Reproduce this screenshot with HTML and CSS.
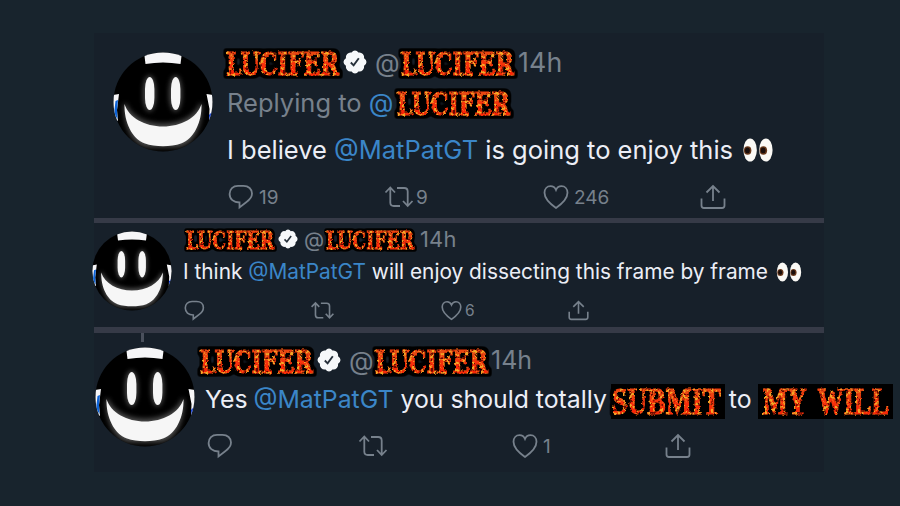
FILE: index.html
```html
<!DOCTYPE html>
<html lang="en">
<head>
    <meta charset="UTF-8">
    <meta name="viewport" content="width=device-width, initial-scale=1.0">
    <title>Tweets</title>
    <link rel="stylesheet" href="styles.css">
</head>
<body>
    <!-- Shared icons -->
    <svg class="defs" width="0" height="0">
        <defs>
            <linearGradient id="fire" x1="0" y1="0" x2="0" y2="1">
                <stop offset="0" stop-color="#d8641c"/>
                <stop offset="0.5" stop-color="#f8300c"/>
                <stop offset="1" stop-color="#ff1200"/>
            </linearGradient>
            <filter id="burn" x="-10%" y="-40%" width="120%" height="180%" color-interpolation-filters="sRGB">
                <feTurbulence type="fractalNoise" baseFrequency="0.32" numOctaves="2" seed="4" result="noise"/>
                <feDisplacementMap in="SourceGraphic" in2="noise" scale="3" xChannelSelector="R" yChannelSelector="G" result="rough"/>
                <feColorMatrix in="noise" type="matrix" values="0 0 0 0 0.96  0 0 0 0 0.66  0 0 0 0 0.15  8 0 0 0 -4.1" result="sparks"/>
                <feComposite in="sparks" in2="rough" operator="in" result="hot"/>
                <feColorMatrix in="noise" type="matrix" values="0 0 0 0 0.4  0 0 0 0 0.04  0 0 0 0 0  0 9 0 0 -5.4" result="soot"/>
                <feComposite in="soot" in2="rough" operator="in" result="dark"/>
                <feMorphology in="SourceAlpha" operator="dilate" radius="3" result="fat"/>
                <feGaussianBlur in="fat" stdDeviation="1.5" result="soft"/>
                <feColorMatrix in="soft" type="matrix" values="0 0 0 0 0  0 0 0 0 0  0 0 0 0 0  0 0 0 3 -0.8" result="halo"/>
                <feMerge>
                    <feMergeNode in="halo"/>
                    <feMergeNode in="rough"/>
                    <feMergeNode in="hot"/>
                    <feMergeNode in="dark"/>
                </feMerge>
            </filter>
            <filter id="glow" x="-20%" y="-20%" width="140%" height="140%">
                <feGaussianBlur stdDeviation="2.5"/>
            </filter>
            <clipPath id="round"><circle cx="50" cy="50" r="49.5"/></clipPath>
        </defs>
        <symbol id="face" viewBox="0 0 100 100">
            <g clip-path="url(#round)">
                <rect width="100" height="100" fill="#000"/>
                <path d="M31 0H69L67.500 12Q50 9 32.500 12Z" fill="#f6f6f8"/>
                <path d="M0 43L6 42L4 58L5 69L0 66Z" fill="#f6f6f8"/>
                <path d="M2.500 49L5 48L4 58L4.500 67L1 62Z" fill="#0c63d8"/>
                <path d="M93.500 42L100 43V68L96 69L96.500 57Z" fill="#f6f6f8"/>
                <path d="M96 63L99 60L97 70Z" fill="#0737d8"/>
                <g fill="#888" stroke="#777" stroke-width="3" opacity="0.6" filter="url(#glow)">
                    <ellipse cx="36.500" cy="41.500" rx="5" ry="16.500"/>
                    <ellipse cx="62.500" cy="41.500" rx="5" ry="16.500"/>
                    <path d="M12 52C22 80 78 80 88 52C88 70 82 94 62 94H38C18 94 12 70 12 52Z"/>
                </g>
                <g fill="#f6f6f6">
                    <rect x="32" y="25" width="9.400" height="33" rx="4.700" ry="12"/>
                    <rect x="58" y="25" width="9.400" height="33" rx="4.700" ry="12"/>
                    <path d="M11.500 52C16 66 32 74.500 50 74.500C68 74.500 84 66 88.500 52C89 70 81 87 68 91.500C58 95 42 95 32 91.500C19 87 11 70 11.500 52Z"/>
                </g>
            </g>
        </symbol>
        <symbol id="verified" viewBox="0 0 24 24">
            <path d="M12 .5Q14.200 .5 15.400 2.600Q17.800 1.900 19.900 4.100Q21.500 5.800 21.100 8.200Q23.500 9.700 23.500 12Q23.500 14.300 21.100 15.800Q21.500 18.200 19.900 19.900Q17.800 22.100 15.400 21.400Q14.200 23.500 12 23.500Q9.800 23.500 8.600 21.400Q6.200 22.100 4.100 19.900Q2.500 18.200 2.900 15.800Q.5 14.300 .5 12Q.5 9.700 2.900 8.200Q2.500 5.800 4.100 4.100Q6.200 1.900 8.600 2.600Q9.800 .5 12 .5Z" fill="#f6f8fa"/>
            <path d="M7.800 12.500L10.600 15.300L15.800 8.300" fill="none" stroke="#26303a" stroke-width="1.900"/>
        </symbol>
        <symbol id="reply" viewBox="0 0 26 26">
            <path d="M10 1.800H15.500C20.500 1.800 24 5 24 9.600C24 13.500 21.800 15.700 18.500 18L11.500 23.500V18.500C5.500 18.500 1.600 15 1.600 10C1.600 5 5 1.800 10 1.800Z"/>
        </symbol>
        <symbol id="retweet" viewBox="0 0 30 26">
            <path d="M1.500 8.500L6.300 3.500L11 8.500M6.300 4V18.500Q6.300 22 9.800 22H16M13 4H20.200Q23.700 4 23.700 7.500V21.500M19 17L23.700 22L28.500 17"/>
        </symbol>
        <symbol id="like" viewBox="0 0 26 26">
            <path d="M13 24C8 20.500 1.500 15 1.500 8.800C1.500 5 4 2.200 7.500 2.200C10 2.200 12 3.600 13 6C14 3.600 16 2.200 18.500 2.200C22 2.200 24.500 5 24.500 8.800C24.500 15 18 20.500 13 24Z"/>
        </symbol>
        <symbol id="share" viewBox="0 0 26 26">
            <path d="M1.500 14.500V21.500Q1.500 24 4 24H22Q24.500 24 24.500 21.500V14.500M13 17V2M6.500 8.500L13 2L19.500 8.500"/>
        </symbol>
        <symbol id="eyes" viewBox="0 0 32 25">
            <ellipse cx="7.800" cy="12.500" rx="7" ry="12" fill="#fbf9f5"/>
            <ellipse cx="24.200" cy="12.500" rx="7" ry="12" fill="#fbf9f5"/>
            <ellipse cx="5.200" cy="13" rx="3.900" ry="4.400" fill="#6b3a1c"/>
            <ellipse cx="21.600" cy="13" rx="3.900" ry="4.400" fill="#6b3a1c"/>
            <ellipse cx="5" cy="13" rx="2.500" ry="3" fill="#1a0d0a"/>
            <ellipse cx="21.400" cy="13" rx="2.500" ry="3" fill="#1a0d0a"/>
        </symbol>
    </svg>

    <div class="thread">
        <div class="tweet first">
            <svg class="avatar"><use href="#face"/></svg>
            <div class="content">
                <div class="head">
                    <svg class="flame" viewBox="0 0 114 24"><text x="-1" y="23" textLength="113" lengthAdjust="spacingAndGlyphs">LUCIFER</text></svg>
                    <svg class="badge"><use href="#verified"/></svg>
                    <span class="at">@</span>
                    <svg class="flame" viewBox="0 0 114 24"><text x="0" y="23" textLength="113" lengthAdjust="spacingAndGlyphs">LUCIFER</text></svg>
                    <span class="time">14h</span>
                </div>
                <div class="replying">
                    <span>Replying to <span class="mention">@</span></span>
                    <svg class="flame" viewBox="0 0 114 24"><text x="0" y="23" textLength="113" lengthAdjust="spacingAndGlyphs">LUCIFER</text></svg>
                </div>
                <div class="text">
                    <span>I believe <span class="mention">@MatPatGT</span> is going to enjoy this</span>
                    <svg class="eyes"><use href="#eyes"/></svg>
                </div>
                <div class="actions">
                    <div class="action"><svg class="icon"><use href="#reply"/></svg>19</div>
                    <div class="action"><svg class="icon wide"><use href="#retweet"/></svg>9</div>
                    <div class="action"><svg class="icon"><use href="#like"/></svg>246</div>
                    <div class="action"><svg class="icon"><use href="#share"/></svg></div>
                </div>
            </div>
        </div>

        <div class="tweet second">
            <svg class="avatar"><use href="#face"/></svg>
            <div class="content">
                <div class="head">
                    <svg class="flame" viewBox="0 0 114 24"><text x="0" y="23" textLength="113" lengthAdjust="spacingAndGlyphs">LUCIFER</text></svg>
                    <svg class="badge"><use href="#verified"/></svg>
                    <span class="at">@</span>
                    <svg class="flame" viewBox="0 0 114 24"><text x="0" y="23" textLength="113" lengthAdjust="spacingAndGlyphs">LUCIFER</text></svg>
                    <span class="time">14h</span>
                </div>
                <div class="text">
                    <span>I think <span class="mention">@MatPatGT</span> will enjoy dissecting this frame by frame</span>
                    <svg class="eyes"><use href="#eyes"/></svg>
                </div>
                <div class="actions">
                    <div class="action"><svg class="icon"><use href="#reply"/></svg></div>
                    <div class="action"><svg class="icon wide"><use href="#retweet"/></svg></div>
                    <div class="action"><svg class="icon"><use href="#like"/></svg>6</div>
                    <div class="action"><svg class="icon"><use href="#share"/></svg></div>
                </div>
            </div>
        </div>

        <div class="tweet third">
            <svg class="avatar"><use href="#face"/></svg>
            <div class="content">
                <div class="head">
                    <svg class="flame" viewBox="0 0 114 24"><text x="0" y="23" textLength="113" lengthAdjust="spacingAndGlyphs">LUCIFER</text></svg>
                    <svg class="badge"><use href="#verified"/></svg>
                    <span class="at">@</span>
                    <svg class="flame" viewBox="0 0 114 24"><text x="0" y="23" textLength="113" lengthAdjust="spacingAndGlyphs">LUCIFER</text></svg>
                    <span class="time">14h</span>
                </div>
                <div class="text">
                    <span>Yes <span class="mention">@MatPatGT</span> you should totally</span>
                    <svg class="flame sign submit" viewBox="0 0 114 35"><text x="1" y="30" textLength="109" lengthAdjust="spacingAndGlyphs">SUBMIT</text></svg>
                    <span>to</span>
                    <svg class="flame sign will" viewBox="0 0 135 35"><text x="5" y="30" textLength="126" lengthAdjust="spacingAndGlyphs">MY WILL</text></svg>
                </div>
                <div class="actions">
                    <div class="action"><svg class="icon"><use href="#reply"/></svg></div>
                    <div class="action"><svg class="icon wide"><use href="#retweet"/></svg></div>
                    <div class="action"><svg class="icon"><use href="#like"/></svg>1</div>
                    <div class="action"><svg class="icon"><use href="#share"/></svg></div>
                </div>
            </div>
        </div>
    </div>
</body>
</html>
```
FILE: styles.css
```css
body {
    margin: 0;
    height: 506px;
    overflow: hidden;
    background-color: #18242d;
    font-family: Inter, "Liberation Sans", sans-serif;
}
.defs {
    position: absolute;
}
.thread {
    width: 730px;
    height: 439px;
    margin: 33px 0 0 94px;
    background-color: #17202a;
}
.tweet {
    display: flex;
    box-sizing: border-box;
    font-size: 25.5px;
    color: #eceef6;
    white-space: nowrap;
}
.avatar {
    flex: none;
    width: 100px;
    height: 100px;
}
.content {
    flex: none;
}
.head,
.replying,
.text {
    display: flex;
    align-items: center;
    height: 40px;
    color: #77818c;
}
.text {
    color: #eceef6;
}
.mention {
    color: #3b86c8;
}

/* Burning words */
.flame {
    flex: none;
    width: 114px;
    height: 24px;
    overflow: visible;
}
.flame text {
    font-family: "DejaVu Serif", serif;
    font-size: 31px;
    font-weight: bold;
    fill: url(#fire);
    stroke: #f23a0c;
    stroke-width: 1px;
    filter: url(#burn);
}
.sign {
    height: 35px;
    background-color: #000;
}
.flame.sign text {
    font-family: "Liberation Serif", serif;
    font-size: 37px;
    word-spacing: 8px;
}
.will {
    width: 135px;
}
.badge {
    flex: none;
    width: 24px;
    height: 24px;
    margin-left: 3px;
}
.at {
    width: 26px;
    margin-left: 8px;
}
.time {
    margin-left: 3px;
    font-size: 1.05em;
    letter-spacing: 0.2px;
}
.eyes {
    width: 32px;
    height: 24px;
    margin-left: 9px;
}

/* Bottom row */
.actions {
    display: grid;
    grid-template-columns: 156px 159px 157px 60px;
    height: 40px;
    color: #77818c;
    font-size: 19px;
}
.action {
    display: flex;
    align-items: center;
    gap: 5px;
}
.icon {
    width: 26px;
    height: 26px;
    fill: none;
    stroke: #77818c;
    stroke-width: 1.8;
}
.wide {
    width: 30px;
    margin-right: -3px;
}

.first {
    height: 190px;
    padding: 9px 0 0 19px;
    border-bottom: 5px solid #363a47;
}
.first .avatar {
    margin: 10px 14px 0 0;
}
.first .flame {
    margin-top: 4px;
}
.first .replying .flame {
    margin-left: 4px;
}
.first .badge {
    margin-left: 2px;
}
.first .text {
    height: 55px;
}
.first .actions {
    padding-left: 1px;
}

.second {
    height: 110px;
    font-size: 20.85px;
    border-bottom: 6px solid #363a47;
}
.second .avatar {
    width: 80px;
    height: 80px;
    margin: 8px 11px 0 -2px;
}
.second .head {
    height: 32px;
}
.second .text {
    height: 33px;
}
.second .flame {
    width: 89px;
    height: 19px;
    margin-top: 3px;
}
.second .head .flame:first-child {
    margin-left: 3px;
}
.second .badge {
    width: 20px;
    height: 20px;
    margin-left: 3px;
}
.second .at {
    width: 22px;
    margin-left: 6px;
}
.second .time {
    margin-left: 5px;
}
.second .eyes {
    width: 26px;
    height: 20px;
    margin-left: 8px;
}
.second .actions {
    grid-template-columns: 126px 131px 127px 60px;
    height: 34px;
    margin-top: 5px;
    padding-left: 1px;
    font-size: 15.5px;
}
.second .icon {
    width: 21px;
    height: 21px;
    stroke-width: 2;
}
.second .action {
    gap: 3px;
}
.second .wide {
    width: 25px;
}

.third {
    padding: 7px 0 0 1px;
    background: linear-gradient(#4a505c, #4a505c) 47px 0 / 3px 9px no-repeat;
}
.third .avatar {
    margin: 7px 11px 0 0;
}
.third .head .flame {
    margin-top: 3px;
}
.third .head .flame:first-child {
    margin-left: -6px;
}
.third .time {
    margin-left: 2px;
    font-size: 25px;
    letter-spacing: 0;
}
.third .text {
    height: 37px;
    font-size: 24.8px;
}
.third .text span:first-child {
    margin-left: -1px;
}
.third .text .mention {
    margin: 0;
}
.third .submit {
    margin: 5px 4px 0;
}
.third .will {
    margin: 5px 0 0 6px;
}
.third .actions {
    grid-template-columns: 151px 154px 153px 60px;
    height: 36px;
    margin-top: 11px;
    padding-left: 1px;
}
```
